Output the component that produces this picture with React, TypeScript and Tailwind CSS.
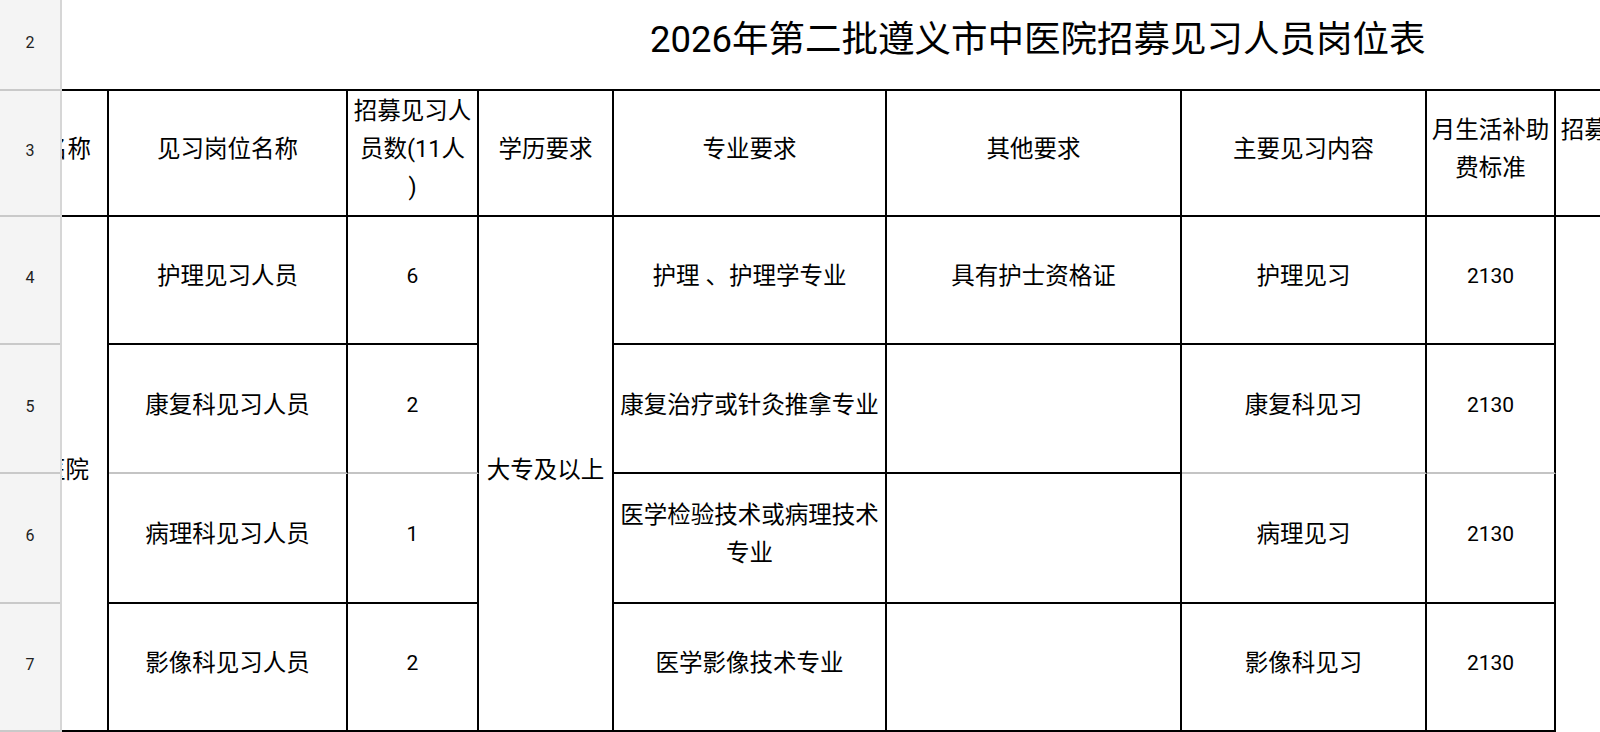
import type { ReactNode } from 'react';

const rowHeads = [
  { label: '2', h: 'h-[91px]' },
  { label: '3', h: 'h-[126px]' },
  { label: '4', h: 'h-[128px]' },
  { label: '5', h: 'h-[129px]' },
  { label: '6', h: 'h-[130px]' },
  { label: '7', h: 'h-[128px]' },
];

type Job = {
  name: string;
  count: string;
  major: ReactNode;
  other: string;
  content: string;
  pay: string;
  grayBottom?: boolean;
};

const jobs: Job[] = [
  { name: '护理见习人员', count: '6', major: '护理 、护理学专业', other: '具有护士资格证', content: '护理见习', pay: '2130' },
  { name: '康复科见习人员', count: '2', major: '康复治疗或针灸推拿专业', other: '', content: '康复科见习', pay: '2130', grayBottom: true },
  { name: '病理科见习人员', count: '1', major: '医学检验技术或病理技术专业', other: '', content: '病理见习', pay: '2130' },
  { name: '影像科见习人员', count: '2', major: '医学影像技术专业', other: '', content: '影像科见习', pay: '2130' },
];

function Cell({ children, className = '' }: { children?: ReactNode; className?: string }) {
  return (
    <div className={`flex items-center justify-center text-center pb-2 leading-[38px] ${className}`}>
      {children}
    </div>
  );
}

// black right + bottom edge, like a bordered sheet cell
const edge = 'border-r-2 border-r-black border-b-2 border-b-black';
const edgeSoft = 'border-r-2 border-r-black border-b-2 border-b-[#c4c4c4]';

function RowHeader() {
  return (
    <div className="w-[62px] shrink-0 flex flex-col bg-[#f4f4f4] border-r-2 border-r-[#d6d6d6] z-10">
      {rowHeads.map((r) => (
        <div
          key={r.label}
          className={`${r.h} flex items-center justify-center pb-1 border-b-2 border-b-[#c9c9c9] text-[16px] text-[#222] font-['Roboto',sans-serif]`}
        >
          {r.label}
        </div>
      ))}
    </div>
  );
}

export default function App() {
  return (
    <div className="w-[1600px] h-[732px] overflow-hidden bg-white flex text-black font-['Roboto','Noto_Sans_CJK_SC',sans-serif]">
      <RowHeader />

      <div className="flex-1 overflow-hidden">
        <div className="-ml-[85px] w-max grid grid-cols-[132px_239px_131px_135px_273px_295px_245px_129px_129px] grid-rows-[91px_126px_128px_129px_130px_128px] text-[23.5px]">
          {/* Title row (merged) */}
          <div className="col-span-9 flex items-center pl-[673px] pb-2 border-b-2 border-b-black whitespace-nowrap text-[36.5px] font-normal">
            2026年第二批遵义市中医院招募见习人员岗位表
          </div>

          {/* Header row */}
          <Cell className={`${edge} justify-end pr-[16px] whitespace-nowrap`}>单位名称</Cell>
          <Cell className={edge}>见习岗位名称</Cell>
          <Cell className={edge}>
            招募见习人
            <br />
            员数(11人
            <br />)
          </Cell>
          <Cell className={edge}>学历要求</Cell>
          <Cell className={edge}>专业要求</Cell>
          <Cell className={edge}>其他要求</Cell>
          <Cell className={edge}>主要见习内容</Cell>
          <Cell className={`${edge} px-[2px]`}>月生活补助费标准</Cell>
          <Cell className={`${edge} px-[2px]`}>招募单位联系</Cell>

          {/* Body */}
          {jobs.map((j, i) => {
            const soft = j.grayBottom ? edgeSoft : edge;
            return [
              i === 0 && (
                <Cell key="unit" className={`${edge} row-span-4 justify-end pr-[18px] whitespace-nowrap`}>
                  遵义市中医院
                </Cell>
              ),
              <Cell key={`n${i}`} className={soft}>{j.name}</Cell>,
              <Cell key={`c${i}`} className={`${soft} text-[21px]`}>{j.count}</Cell>,
              i === 0 && (
                <Cell key="edu" className={`${edge} row-span-4`}>
                  大专及以上
                </Cell>
              ),
              <Cell key={`m${i}`} className={`${edge} px-1`}>{j.major}</Cell>,
              <Cell key={`o${i}`} className={edge}>{j.other}</Cell>,
              <Cell key={`t${i}`} className={soft}>{j.content}</Cell>,
              <Cell key={`p${i}`} className={`${soft} text-[21px]`}>{j.pay}</Cell>,
              i === 0 && <div key="blank" className="row-span-4" />,
            ];
          })}
        </div>
      </div>
    </div>
  );
}
